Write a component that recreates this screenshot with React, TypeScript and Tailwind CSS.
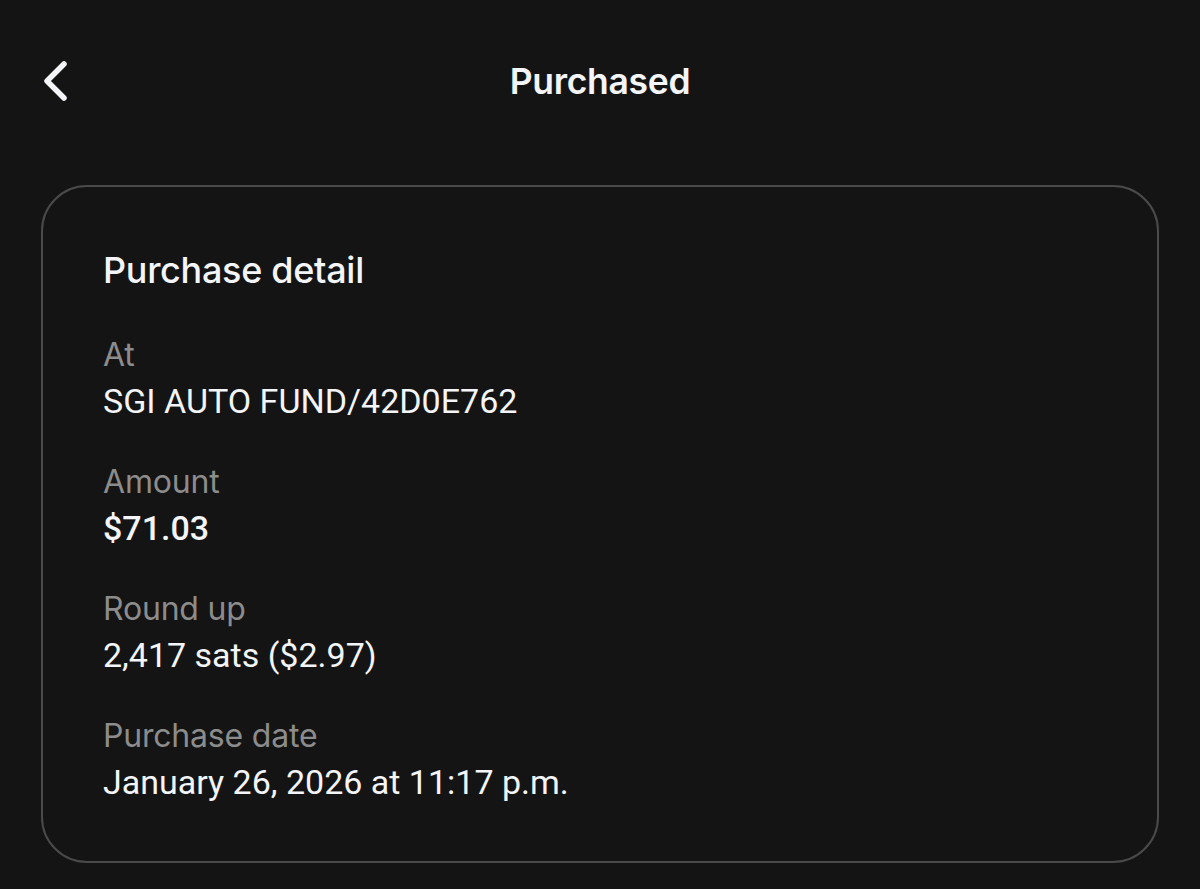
import React from "react";

const rows = [
  { label: "At", value: "SGI AUTO FUND/42D0E762" },
  { label: "Amount", value: "$71.03", bold: true },
  { label: "Round up", value: "2,417 sats ($2.97)" },
  { label: "Purchase date", value: "January 26, 2026 at 11:17 p.m." },
];

export default function App() {
  return (
    <div
      className="w-[1200px] h-[889px] bg-[#141414] text-[#f3f5f9] overflow-hidden"
      style={{ fontFamily: "Inter, 'Noto Sans', sans-serif" }}
    >
      <div className="relative h-[165px] flex items-center justify-center">
        <button className="absolute left-[38px] top-[56px] text-[#f3f5f9]">
          <ChevronLeft />
        </button>
        <h1 className="text-[35.5px] font-semibold tracking-[-0.3px] -mt-[2px]">Purchased</h1>
      </div>
      <div className="mx-[41px] mt-[20px] h-[678px] rounded-[46px] border-2 border-[#4a4a4a] pl-[60px] pt-[61px]">
        <h2 className="text-[36px] font-medium leading-[44px] tracking-[-0.3px]">Purchase detail</h2>
        <div className="mt-[43px] flex flex-col gap-[35px]">
          {rows.map((row) => (
            <div key={row.label} className="flex flex-col">
              <span className="text-[32px] leading-[40px] text-[#8c8c8c] tracking-[-0.2px]">
                {row.label}
              </span>
              <span
                className={`text-[34px] leading-[52px] ${row.bold ? "font-medium" : "font-normal"}`}
                style={{ fontFamily: "Roboto, sans-serif" }}
              >
                {row.value}
              </span>
            </div>
          ))}
        </div>
      </div>
    </div>
  );
}

const ChevronLeft = () => {
  return (
    <svg width="34" height="50" viewBox="0 0 34 50" fill="none" stroke="currentColor" strokeWidth="5.5" strokeLinecap="round" strokeLinejoin="round">
      <path d="M26 8 L9 25 L26 42" />
    </svg>
  );
};
